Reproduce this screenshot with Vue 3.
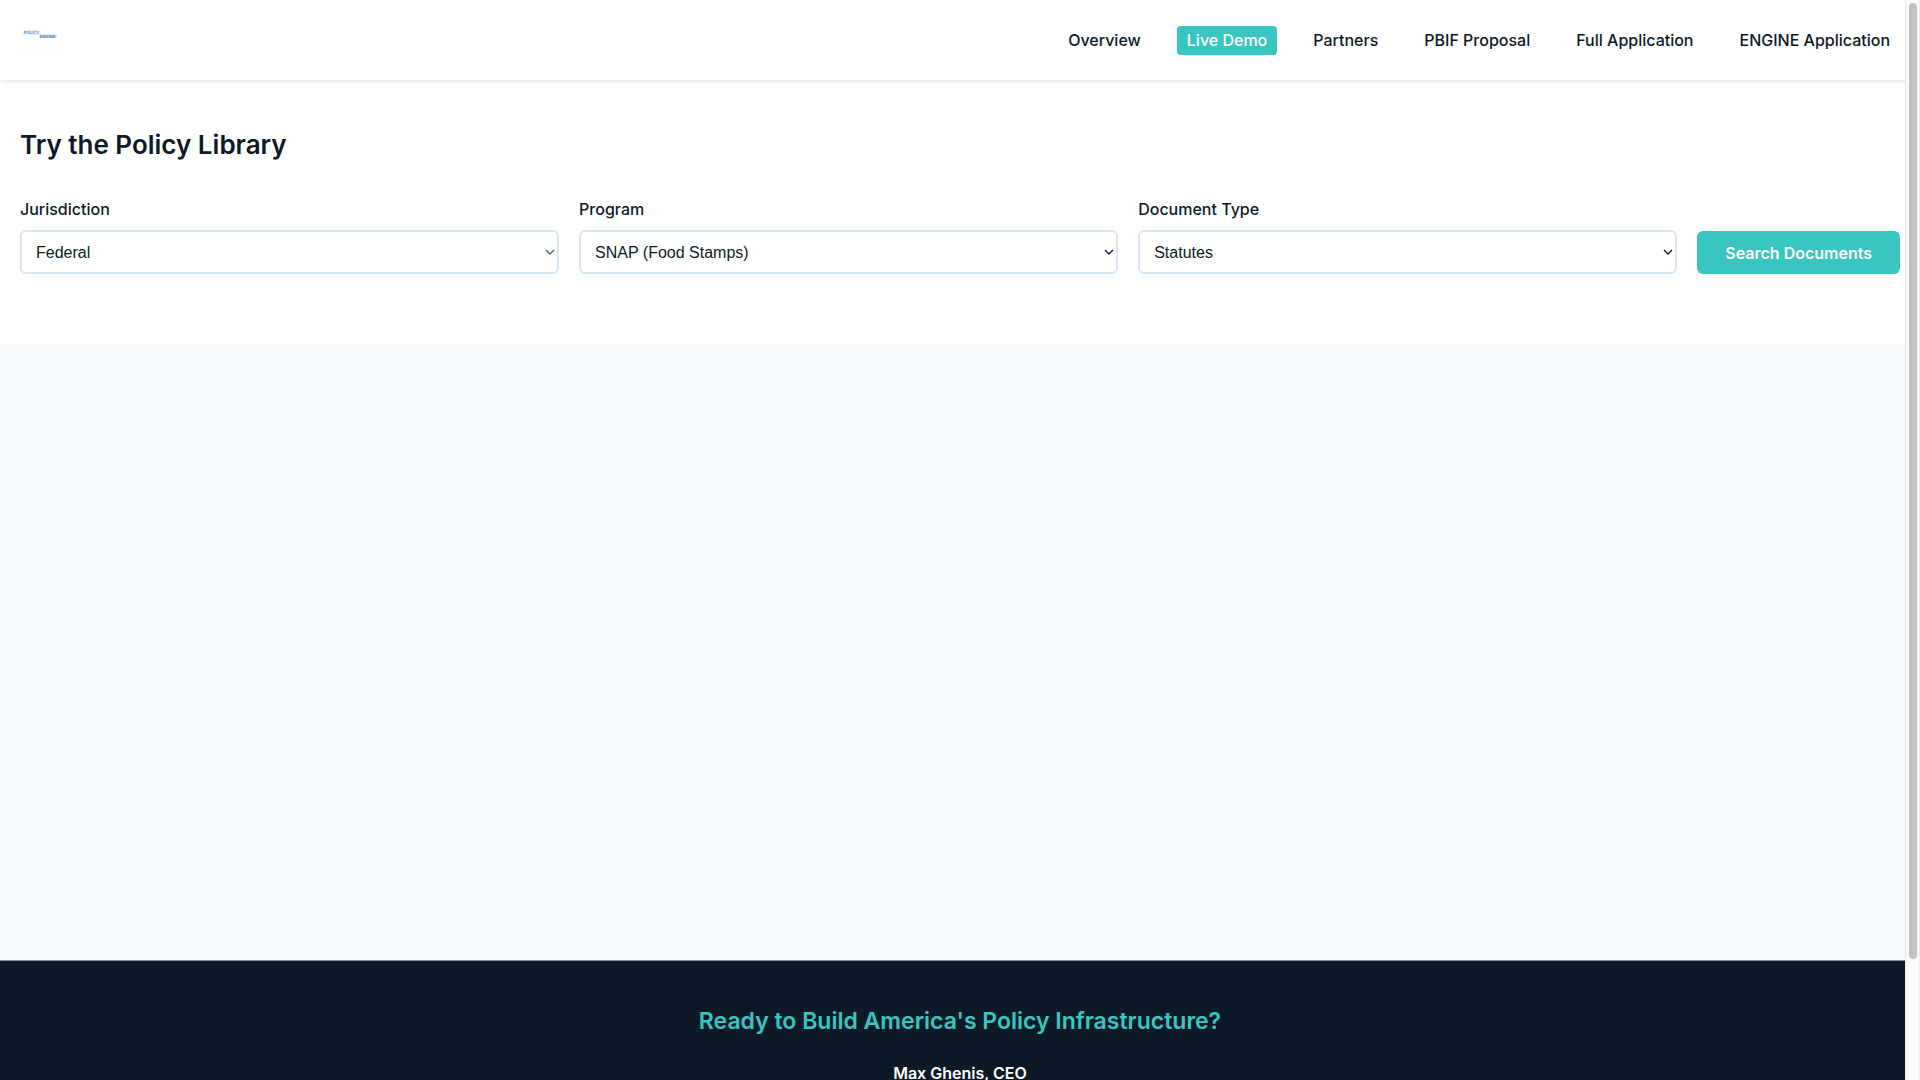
<script setup>
import { ref } from 'vue'

const links = [
  { label: 'Overview', href: '#overview' },
  { label: 'Live Demo', href: '#demo', active: true },
  { label: 'Partners', href: '#partners' },
  { label: 'PBIF Proposal', href: '#pbif' },
  { label: 'Full Application', href: '#application' },
  { label: 'ENGINE Application', href: '#engine' },
]

const fields = [
  { id: 'jurisdiction', label: 'Jurisdiction', options: ['Federal'] },
  { id: 'program', label: 'Program', options: ['SNAP (Food Stamps)'] },
  { id: 'document-type', label: 'Document Type', options: ['Statutes'] },
]

const filters = ref({
  jurisdiction: 'Federal',
  program: 'SNAP (Food Stamps)',
  'document-type': 'Statutes',
})
</script>

<template>
  <div class="page">
    <header class="header">
      <a class="logo" href="#overview" aria-label="PolicyEngine">
        <svg width="40" height="40" viewBox="0 0 40 40">
          <rect x="3" y="10" width="18" height="5" fill="#edf4f9" />
          <rect x="19" y="14" width="18" height="4" fill="#dfeaf3" />
          <text x="4" y="14">POLICY</text>
          <text x="20" y="18">ENGINE</text>
          <path d="M2 34.5H38" stroke="#fafafa" />
        </svg>
      </a>
      <nav class="nav">
        <a
          v-for="link in links"
          :key="link.href"
          :href="link.href"
          class="nav-link"
          :class="{ active: link.active }"
        >{{ link.label }}</a>
      </nav>
    </header>

    <main class="main">
      <section class="demo">
        <h1 class="title">Try the Policy Library</h1>
        <form class="filters" @submit.prevent>
          <div v-for="field in fields" :key="field.id" class="field">
            <label :for="field.id">{{ field.label }}</label>
            <div class="select-box">
              <select :id="field.id" v-model="filters[field.id]">
                <option v-for="option in field.options" :key="option">{{ option }}</option>
              </select>
              <svg class="chevron" width="10" height="6" viewBox="0 0 10 6" aria-hidden="true">
                <path d="M1 1L5 5L9 1" fill="none" stroke="currentColor" stroke-width="1.3" />
              </svg>
            </div>
          </div>
          <button class="search" type="submit">Search Documents</button>
        </form>
      </section>
    </main>

    <footer class="footer">
      <h2 class="footer-title">Ready to Build America's Policy Infrastructure?</h2>
      <p class="contact">Max Ghenis, CEO</p>
    </footer>

    <div class="scrollbar" aria-hidden="true"><div class="thumb"></div></div>
  </div>
</template>

<style>
body {
  margin: 0;
  background: #f7fafd;
}
</style>

<style scoped>
.page {
  height: 100vh;
  overflow: hidden;
  color: #0c1a27;
  font-family: Inter, "Liberation Sans", sans-serif;
  font-size: 16px;
  line-height: 26px;
}

.header {
  position: relative;
  display: flex;
  align-items: center;
  justify-content: space-between;
  box-sizing: border-box;
  height: 80px;
  padding: 0 20px;
  background: #fff;
  box-shadow: 0 2px 4px rgba(0, 0, 0, 0.1);
}

.logo {
  display: flex;
}

.logo text {
  fill: #4680ad;
  font-family: "Liberation Sans", sans-serif;
  font-size: 4px;
  font-weight: 700;
}

.nav {
  display: flex;
  gap: 26px;
}

.nav-link {
  padding: 5px 10px;
  border-radius: 4px;
  color: inherit;
  font-weight: 500;
  line-height: 19px;
  text-decoration: none;
}

.nav-link.active {
  background: #39c6c0;
  color: #fff;
}

.main {
  min-height: calc(100vh - 200px);
}

.demo {
  padding: 40px 20px 70px;
  background: #fff;
}

.title {
  margin: 0 0 26px;
  font-size: 26px;
  font-weight: 600;
  line-height: 50px;
}

.filters {
  display: grid;
  grid-template-columns: repeat(3, 1fr) auto;
  align-items: end;
  gap: 20px;
}

.field {
  display: flex;
  flex-direction: column;
  gap: 8px;
}

.field label {
  font-weight: 500;
}

.select-box {
  position: relative;
  display: flex;
}

.chevron {
  position: absolute;
  top: 19px;
  right: 4px;
  pointer-events: none;
}

.field:first-child .chevron {
  opacity: 0.7;
}

.field select {
  appearance: none;
  box-sizing: border-box;
  width: 100%;
  height: 44px;
  padding: 10px 14px;
  border: 2px solid #d8e6f3;
  border-radius: 6px;
  background: #fff;
  color: #0c1a27;
  font-family: "Liberation Sans", Arial, sans-serif;
  font-size: 16px;
}

.search {
  height: 43px;
  padding: 0 28px;
  border: 0;
  border-radius: 6px;
  background: #39c6c0;
  color: #fff;
  font-family: inherit;
  font-size: 16px;
  font-weight: 600;
}

.footer {
  padding: 39px 20px 40px;
  border-top: 1px solid #84909b;
  background: #0c1a27;
  text-align: center;
}

.footer-title {
  margin: 0 0 18px;
  color: #39c6c0;
  font-size: 23px;
  font-weight: 600;
  line-height: 42px;
}

.contact {
  margin: 0;
  color: #fff;
  font-weight: 600;
}

.scrollbar {
  position: fixed;
  top: 0;
  right: 0;
  bottom: 0;
  box-sizing: border-box;
  width: 15px;
  padding: 3px;
  border-right: 1px solid #ededed;
  border-left: 1px solid #e8e8e8;
  background: #fafafa;
}

.thumb {
  width: 8px;
  height: 89%;
  margin: 0 auto;
  border-radius: 4px;
  background: #c1c1c1;
}
</style>
